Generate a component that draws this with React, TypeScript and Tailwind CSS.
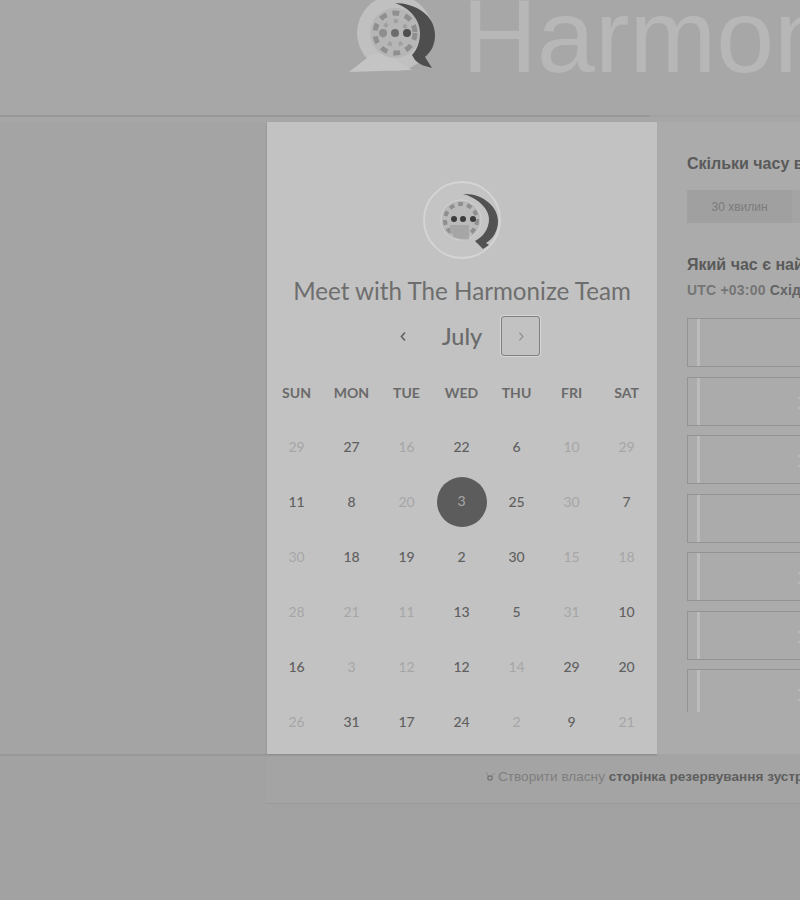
const weekDays = ["SUN", "MON", "TUE", "WED", "THU", "FRI", "SAT"];

// [day, enabled]
const days: [number, boolean][] = [
  [29, false], [27, true], [16, false], [22, true], [6, true], [10, false], [29, false],
  [11, true], [8, true], [20, false], [3, true], [25, true], [30, false], [7, true],
  [30, false], [18, true], [19, true], [2, true], [30, true], [15, false], [18, false],
  [28, false], [21, false], [11, false], [13, true], [5, true], [31, false], [10, true],
  [16, true], [3, false], [12, false], [12, true], [14, false], [29, true], [20, true],
  [26, false], [31, true], [17, true], [24, true], [2, false], [9, true], [21, false],
];

// true where the row's label starts inside the picture
const slots = [false, true, true, false, true, true, true];

function Logo() {
  return (
    <svg viewBox="0 0 92 75" className="h-[75px] w-[92px] shrink-0">
      <circle cx="50" cy="33" r="38" fill="#c0c0c0" />
      <path d="M4 72 27 54h14l26 16Z" fill="#c4c4c4" />
      <circle cx="50" cy="33" r="25" fill="#b6b6b6" />
      <circle cx="50" cy="33" r="20" fill="none" stroke="#8f8f8f" strokeWidth="5" strokeDasharray="7 6" />
      <circle cx="50" cy="33" r="12" fill="none" stroke="#a0a0a0" strokeWidth="4" strokeDasharray="4 7" />
      <path d="M50 3C70 3 90 15 90 35c0 10-4 17-10 22l7 11c-7-2-12-3-17-8l-3-5c5-5 8-13 8-22C75 20 65 8 50 3Z" fill="#4e4e4e" />
      <circle cx="38" cy="33" r="4" fill="#8e8e8e" />
      <circle cx="50" cy="33" r="4" fill="#6c6c6c" />
      <circle cx="62" cy="33" r="4" fill="#4e4e4e" />
    </svg>
  );
}

function Avatar() {
  return (
    <div className="mt-px size-[78px] overflow-hidden rounded-full border-2 border-[#d4d4d4] bg-[#c4c4c4]">
      <svg viewBox="2 2 74 74" className="size-full">
        <circle cx="38" cy="39" r="20" fill="#bababa" stroke="#d2d2d2" />
        <circle cx="38" cy="39" r="16" fill="none" stroke="#8f8f8f" strokeWidth="4" strokeDasharray="5 4" />
        <path d="M27 44h19v14c-8 2-16-2-19-8Z" fill="#a6a6a6" />
        <path d="M40 13c20-1 35 13 35 27 0 10-5 18-12 22l3 2-6 4-8-8c8-4 14-12 14-22S55 17 40 13Z" fill="#525252" />
        <circle cx="31" cy="38" r="3" fill="#3c3c3c" />
        <circle cx="40" cy="38" r="3" fill="#3c3c3c" />
        <circle cx="50" cy="38" r="3" fill="#3c3c3c" />
      </svg>
    </div>
  );
}

function Calendar() {
  return (
    <div className="flex h-[632px] w-[390px] shrink-0 flex-col items-center bg-[#c2c2c2] pt-[58px] font-['Lato',sans-serif] text-[#5f5f5f] shadow-[0_1px_2px_rgba(0,0,0,0.2)]">
      <Avatar />
      <h1 className="mt-[14px] text-[24.2px] leading-[36px] font-normal text-[#6e6e6e]">Meet with The Harmonize Team</h1>
      <div className="mt-[7px] -ml-px flex h-10 items-center">
        <button className="flex size-10 items-center justify-center">
          <svg viewBox="0 0 10 14" className="h-[11px] w-2">
            <path d="M7.5 2 3 7l4.5 5" fill="none" stroke="#606060" strokeWidth="2" />
          </svg>
        </button>
        <div className="w-[78px] pt-[2px] text-center text-[23.5px] font-medium text-[#6a6a6a]">July</div>
        <button className="flex h-10 w-[39px] items-center justify-center rounded-[3px] border border-[#7f7f7f] shadow-[0_0_0_1px_#d6d6d6]">
          <svg viewBox="0 0 10 14" className="h-[11px] w-2">
            <path d="M3 2l4.5 5L3 12" fill="none" stroke="#8e8e8e" strokeWidth="1.5" />
          </svg>
        </button>
      </div>
      <div className="mt-[9px] -ml-px grid w-[385px] grid-cols-7 text-center">
        {weekDays.map((d) => (
          <div key={d} className="flex h-[54px] items-center justify-center text-[14px] font-bold text-[#6a6a6a]">
            {d}
          </div>
        ))}
        {days.map(([day, enabled], i) =>
          i === 10 ? (
            <div key={i} className="flex h-[55px] items-center justify-center">
              <div className="flex size-[50px] items-center justify-center rounded-full bg-[#5c5c5c] pb-[3px] text-[14px] text-[#a8a8a8]">
                {day}
              </div>
            </div>
          ) : (
            <div
              key={i}
              className={
                enabled
                  ? "flex h-[55px] items-center justify-center text-[14px] font-medium text-[#606060]"
                  : "flex h-[55px] items-center justify-center text-[14px] text-[#a6a6a6]"
              }
            >
              {day}
            </div>
          ),
        )}
      </div>
    </div>
  );
}

function Picker() {
  return (
    <div className="h-[632px] w-[500px] shrink-0 bg-[#ababab] pt-[32px] pl-[30px] font-['Liberation_Sans',Arial,sans-serif]">
      <div className="text-[16px] leading-5 font-bold whitespace-nowrap text-[#5a5a5a]">Скільки часу вам потрібно?</div>
      <div className="mt-[16px] flex h-[33px]">
        <div className="flex w-[105px] items-center justify-center bg-[#a0a0a0] text-[12px] text-[#7b7b7b]">30 хвилин</div>
        <div className="w-[105px] bg-[#a4a4a4]" />
      </div>
      <div className="mt-[32px] text-[16px] leading-5 font-bold whitespace-nowrap text-[#5a5a5a]">Який час є найкращим?</div>
      <div className="mt-[5px] text-[14px] leading-5 font-bold tracking-[0.2px] whitespace-nowrap text-[#757575]">
        UTC +03:00 <span className="text-[#636363]">Східна Європа</span>
      </div>
      <div className="mt-[18px] flex h-[394px] flex-col gap-[9.5px] overflow-hidden">
        {slots.map((hasLabel, i) => (
          <div key={i} className="flex h-[49px] w-[400px] shrink-0 items-center border border-[#939393]">
            <div className="ml-[9px] h-full w-[3px] shrink-0 bg-[#bcbcbc]" />
            {hasLabel && <span className="ml-[96px] text-[22px] text-[#bababa]">:</span>}
          </div>
        ))}
      </div>
    </div>
  );
}

export default function App() {
  return (
    <div className="h-[900px] w-[800px] overflow-hidden bg-[#a2a2a2]">
      <header className="flex h-[115px] items-start overflow-hidden bg-[#a7a7a7] pl-[345px] font-['Liberation_Sans',Arial,sans-serif]">
        <Logo />
        <div className="-mt-[24px] ml-[25px] text-[104px] leading-[120px] font-normal whitespace-nowrap text-[#b7b7b7]">
          Harmonize
        </div>
      </header>
      <div className="h-[2px] w-[650px] bg-[#989898]" />
      <div className="flex h-[637px] bg-[#a7a7a7] pt-[5px]">
        <div className="w-[267px] shrink-0 bg-[#a4a4a4]" />
        <Calendar />
        <Picker />
      </div>
      <div className="h-[2px] w-[267px] bg-[#989898]" />
      <div className="-mt-[2px] ml-[267px] flex h-[50px] w-[700px] items-center border-b border-[#999999] bg-[#a4a4a4] pb-[3px] pl-[217px] font-['Liberation_Sans',Arial,sans-serif] text-[13.6px] whitespace-nowrap text-[#7e7e7e]">
        <svg viewBox="0 0 12 12" className="mr-[2px] size-3 shrink-0">
          <circle cx="6" cy="7" r="2.2" fill="none" stroke="#707070" strokeWidth="1.2" />
          <path d="M2 1l2.4 4M8 5l2.5-3" stroke="#8a8a8a" strokeWidth="1" />
        </svg>
        Створити власну&nbsp;
        <b className="text-[#5e5e5e]">сторінка резервування зустрічей</b>
      </div>
    </div>
  );
}
